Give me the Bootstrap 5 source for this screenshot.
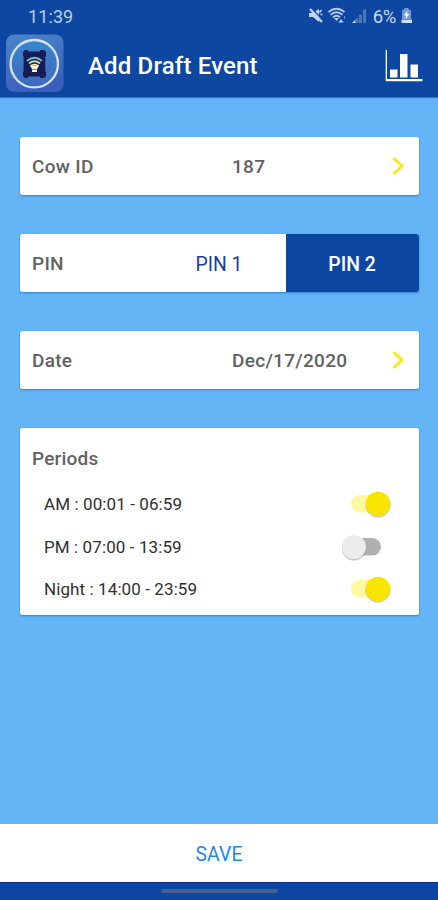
<!DOCTYPE html>
<html lang="en">
<head>
<meta charset="utf-8">
<meta name="viewport" content="width=device-width, initial-scale=1">
<title>Add Draft Event</title>
<link href="https://cdn.jsdelivr.net/npm/bootstrap@5.3.0/dist/css/bootstrap.min.css" rel="stylesheet">
<style>
:root{--navy:#0d47a1;--sky:#64b5f6;--sun:#f9e400}
body{font-family:Roboto,"Liberation Sans",sans-serif;background:var(--sky);height:900px;overflow:hidden;color:#222}
.topbar{background:var(--navy);height:97px;box-shadow:0 1px 1px #0d47a199}
.status{height:32px;padding:0 25px 0 28px;font-size:18px;color:#b9cbed;line-height:32px}
.status span{padding-top:1px}
.status .clock{letter-spacing:.1px}
.status .battery{font-size:18.5px;letter-spacing:-.3px;margin-left:1px;margin-right:1px;color:#cbd8f2}
.titlebar{height:65px;padding:0 15px 0 5px}
.titlebar h1{font-size:24px;font-weight:500;margin-left:24px;line-height:32px;letter-spacing:.17px;padding-top:2px}
.logo{margin-top:-3px}
.chart{margin-top:2px}
main{padding:39.5px 19px 0 20px;gap:39px}
.panel{border:0;border-radius:2.5px;box-shadow:0 1px 2px #1565c0aa;color:#626262;font-size:19px;font-weight:500;letter-spacing:.3px;overflow:hidden}
.field{height:58.3px;padding:0 14px 0 12px}
.field span{padding-top:3px}
.field .caption{width:200px}
.pin{height:58.3px}
.pin .caption{width:133px;padding:3px 0 0 12px}
.pin button{width:133px;border:0;border-radius:0;font-size:19.4px;padding:4px 0 0 1px;letter-spacing:0;color:#173f9b}
.pin .btn:first-of-type{padding-right:2px}
.pin button.active{background:var(--navy);color:#fff;font-weight:500;padding-right:2px}
.periods{height:186.5px;padding:17px 27px 0 12px}
.periods h2{font-size:19px;line-height:28px;letter-spacing:.2px;margin-bottom:9.5px}
.period{height:42.5px;padding-left:12px;font-size:17px;font-weight:400;color:#303030;letter-spacing:.1px}
.period span{padding-top:2px}
.toggle{width:50px;height:28px;border:0;padding:0;background:none}
.save{height:58.5px;border:0;border-radius:0;background:#fff;color:#1e88e5;font-size:19.4px;letter-spacing:.1px;padding:4px 0 0}
.home{height:18px;background:var(--navy);border-top:1px solid #0b2a8c;padding-bottom:1px}
.home span{width:117px;height:4px;border-radius:2px;background:#46608f}
</style>
</head>
<body class="d-flex flex-column">
<header class="topbar flex-shrink-0">
  <div class="status d-flex align-items-center">
    <span class="clock me-auto">11:39</span>
    <svg width="66" height="20" viewBox="306 6 66 20" fill="none">
      <path d="M309 13h4l6-4v13l-6-5h-4z" fill="#c3d4f4"/>
      <path d="M311 8l13 13" stroke="#0d47a1" stroke-width="1.500"/>
      <path d="M310 9l12 13" stroke="#c3d4f4" stroke-width="2.200"/>
      <path d="M319.500 12.500l2-2.500M320.500 14.500h2" stroke="#c3d4f4" stroke-width="1.500"/>
      <g stroke="#b9cbed" stroke-width="1.800"><path d="M328.500 12q8-6.500 16 0"/><path d="M330.500 14.800q6-5 12 0"/><path d="M333 17.300q3.500-3 7 0"/></g>
      <path d="M334 18h5l-2.500 3z" fill="#b9cbed"/>
      <path d="M338.500 22.500l2.500-3.500 2.500 3.500z" fill="#c3d4f4"/>
      <path d="M344.500 16v3" stroke="#678cca"/>
      <path d="M352 23l3.500-3.500V23z" fill="#c3d4f4"/>
      <path d="M356 18h2.500v5H356zM359 14.500h3V23h-3zM363 9.500h3V23h-3z" fill="#4c75ba"/>
    </svg>
    <span class="battery">6%</span>
    <svg class="ms-1" width="12" height="18" viewBox="401 7 12 18">
      <path d="M402 11q0-1.500 1.500-1.500h1V8h4v1.500h1q1.500 0 1.500 1.500v8H402z" fill="#7899d2"/>
      <path d="M401.500 19.500H412V23h-10.500z" fill="#d1dcf5"/>
      <path d="M407.500 10.500l-3.500 5h2.200l-.8 4 4-5.500H407z" fill="#fff"/>
    </svg>
  </div>
  <div class="titlebar d-flex align-items-center">
    <svg class="logo" width="59" height="59" viewBox="0 0 59 59">
      <defs>
        <linearGradient id="tile" x1="0" y1="0" x2=".3" y2="1"><stop stop-color="#4b86c8"/><stop offset="1" stop-color="#3a5fbd"/></linearGradient>
        <linearGradient id="disc" x2="0" y2="1"><stop stop-color="#3987cb"/><stop offset="1" stop-color="#3e68c0"/></linearGradient>
      </defs>
      <rect x="1" y=".5" width="57.500" height="57.500" rx="8" fill="url(#tile)"/>
      <circle cx="29.300" cy="29.700" r="23.700" fill="url(#disc)" stroke="#d3e2f2" stroke-width="2.300"/>
      <path d="M20 16h3v1.500h12V16h4l2 2v4l-.7 1v14l.7 1v4l-2 2h-4v-1.500H23V44h-3l-2-2v-4l.6-1V23l-.6-1v-4z" fill="#161d55"/>
      <g fill="none" stroke-width="1.700"><path d="M22 27q7.500-6.500 15 0" stroke="#78b8ce"/><path d="M24 29.500q5.500-4.500 11 0" stroke="#c9d8a0"/><path d="M25.500 32q4-3 8 0" stroke="#f5efaa"/></g>
      <path d="M25 31.500h9l-2 3.500h-5zM27 35.500h5V38h-5z" fill="#fffce1"/>
    </svg>
    <h1 class="text-white mb-0 me-auto">Add Draft Event</h1>
    <svg class="chart" width="38" height="32" viewBox="0 0 38 32" fill="#fff">
      <path d="M.7 0H2v29h35.500v2.200H.7z"/>
      <path d="M5 19.500h7.500V27.500H5zM15 4h7.500v23.500H15zM25.500 14.500H33v13h-7.500z"/>
    </svg>
  </div>
</header>

<main class="d-flex flex-column flex-grow-1">
  <section class="panel card">
    <div class="field d-flex align-items-center">
      <span class="caption">Cow ID</span><span>187</span>
      <svg class="ms-auto" width="14" height="20" viewBox="0 0 14 20" fill="none"><path d="M2.500 2l8.500 8-8.500 8" stroke="#f9e916" stroke-width="3"/></svg>
    </div>
  </section>
  <section class="panel card">
    <div class="pin d-flex align-items-stretch">
      <span class="caption d-flex align-items-center">PIN</span>
      <button type="button" class="btn">PIN 1</button>
      <button type="button" class="btn active">PIN 2</button>
    </div>
  </section>
  <section class="panel card">
    <div class="field d-flex align-items-center">
      <span class="caption">Date</span><span>Dec/17/2020</span>
      <svg class="ms-auto" width="14" height="20" viewBox="0 0 14 20" fill="none"><path d="M2.500 2l8.500 8-8.500 8" stroke="#f9e916" stroke-width="3"/></svg>
    </div>
  </section>
  <section class="panel card periods">
    <h2>Periods</h2>
    <div class="period d-flex align-items-center justify-content-between flex-shrink-0">
      <span>AM : 00:01 - 06:59</span>
      <button type="button" class="toggle d-flex" role="switch" aria-checked="true" aria-label="AM">
        <svg width="50" height="28" viewBox="0 0 50 28"><rect x="9" y="5" width="34" height="17.500" rx="8.700" fill="#fff8a3"/><circle cx="36" cy="15.200" r="12.500" fill="#0003"/><circle cx="36" cy="14" r="12.300" fill="#f9e400"/></svg>
      </button>
    </div>
    <div class="period d-flex align-items-center justify-content-between flex-shrink-0">
      <span>PM : 07:00 - 13:59</span>
      <button type="button" class="toggle d-flex" role="switch" aria-checked="false" aria-label="PM">
        <svg width="50" height="28" viewBox="0 0 50 28"><rect x="5" y="5" width="34" height="17.500" rx="8.700" fill="#b0b0b0"/><circle cx="12" cy="15.200" r="12.300" fill="#0003"/><circle cx="12" cy="14" r="12" fill="#ececec"/></svg>
      </button>
    </div>
    <div class="period d-flex align-items-center justify-content-between flex-shrink-0">
      <span>Night : 14:00 - 23:59</span>
      <button type="button" class="toggle d-flex" role="switch" aria-checked="true" aria-label="Night">
        <svg width="50" height="28" viewBox="0 0 50 28"><rect x="9" y="5" width="34" height="17.500" rx="8.700" fill="#fff8a3"/><circle cx="36" cy="15.200" r="12.500" fill="#0003"/><circle cx="36" cy="14" r="12.300" fill="#f9e400"/></svg>
      </button>
    </div>
  </section>
</main>

<footer class="flex-shrink-0">
  <button type="button" class="save btn w-100 d-block">SAVE</button>
  <div class="home d-flex align-items-center justify-content-center"><span></span></div>
</footer>
<script src="https://cdn.jsdelivr.net/npm/bootstrap@5.3.0/dist/js/bootstrap.bundle.min.js"></script>
</body>
</html>
